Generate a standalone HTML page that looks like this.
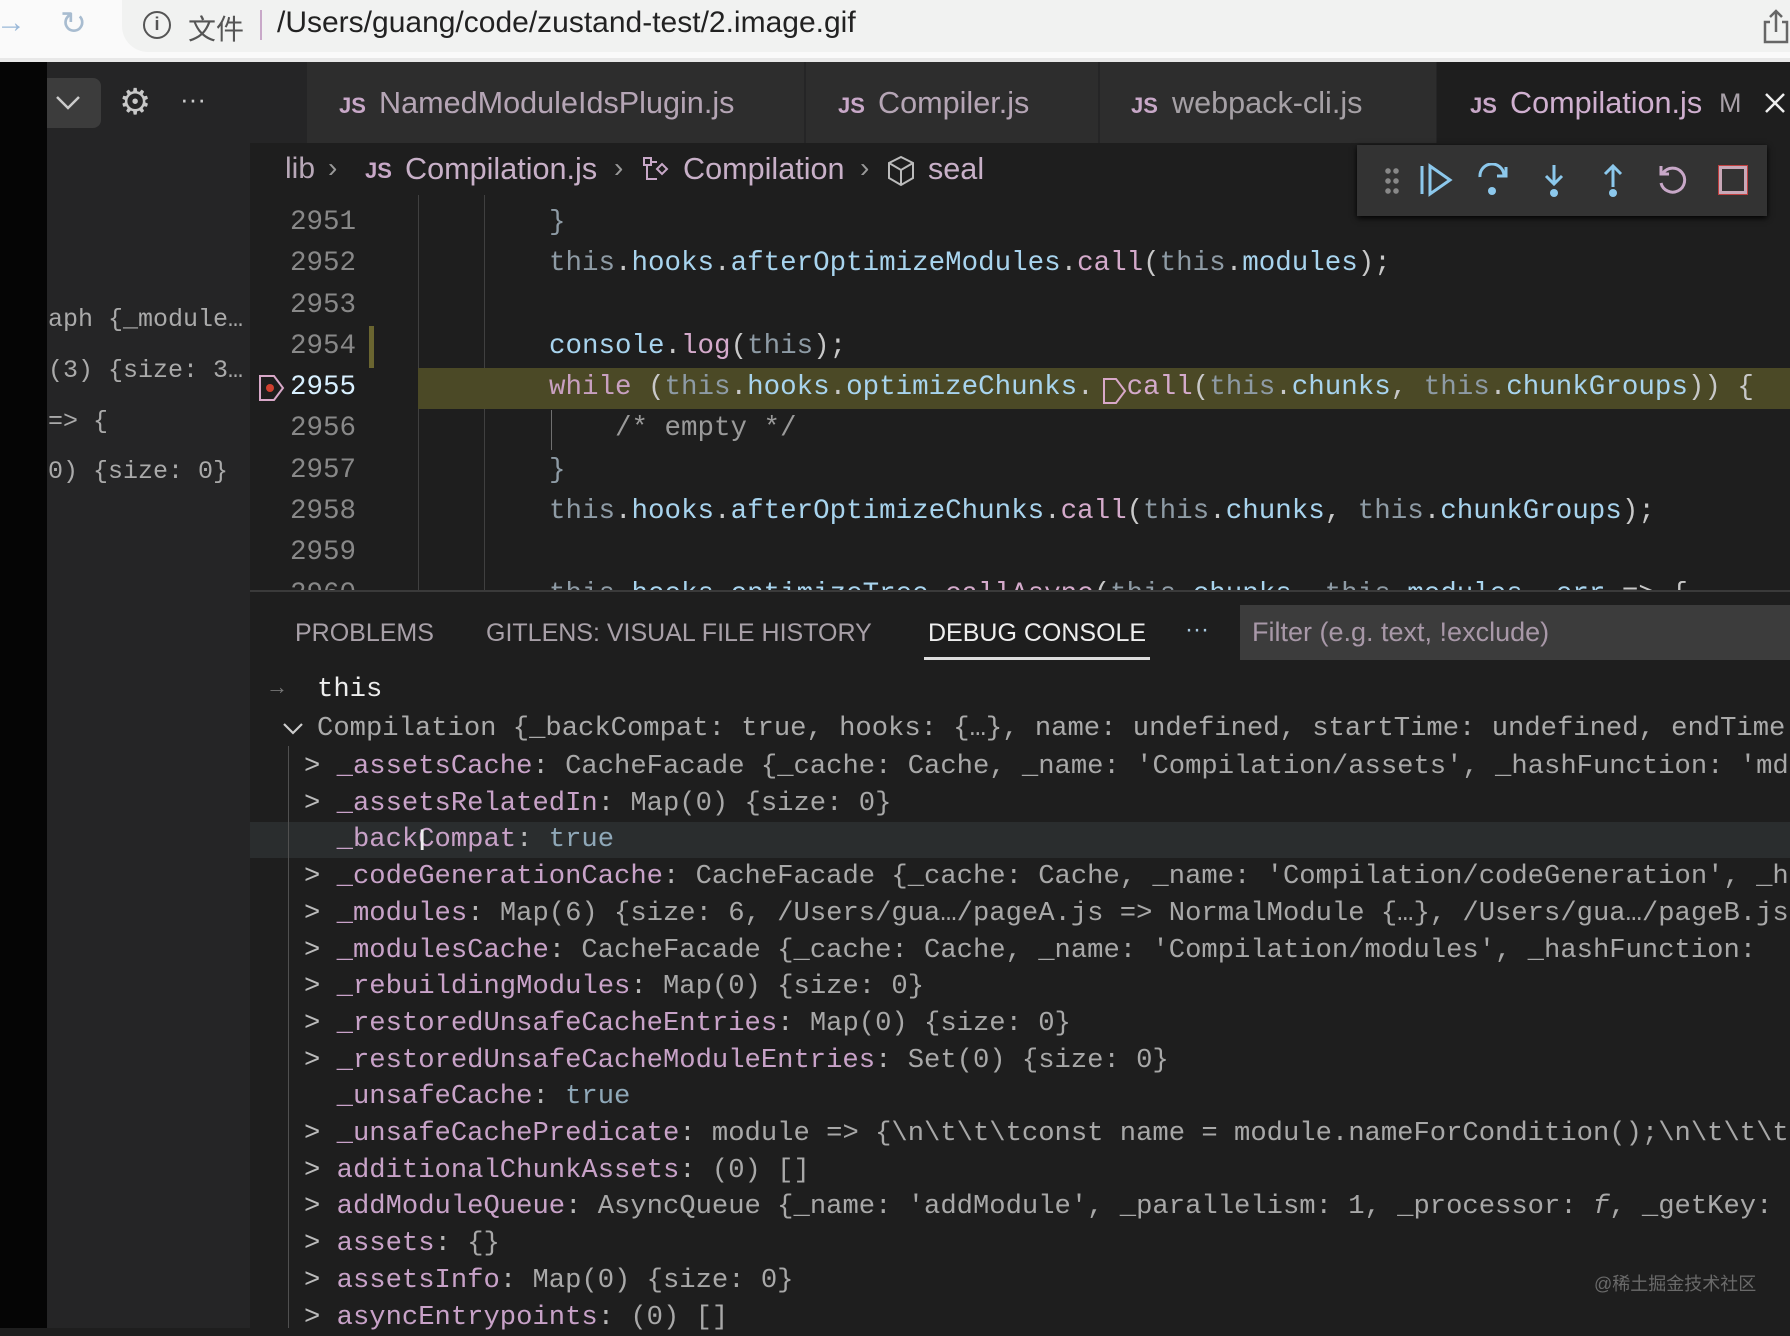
<!DOCTYPE html>
<html><head><meta charset="utf-8">
<style>
*{margin:0;padding:0;box-sizing:border-box}
body{width:1790px;height:1328px;overflow:hidden;background:#1e1e1e;position:relative;font-family:"Liberation Sans","Noto Sans CJK SC",sans-serif}
.a{position:absolute;white-space:pre}
.m{font-family:"Liberation Mono","DejaVu Sans Mono",monospace}
.code{font-size:27.5px;line-height:41.3px;color:#c8c8c8}
.t{color:#8e9ba5}.p{color:#a8d4ee}.f{color:#d4aacb}.k{color:#c8a0c0}.c{color:#9a9a9a}
.con{font-size:27.2px;line-height:36px;color:#b8b8b8}
.n{color:#c8a2c8}.v{color:#a8a8a8}.b{color:#8fa8b8}.g{color:#bbb}
</style></head><body>
<!-- browser bar -->
<div class="a" style="left:0;top:0;width:1790px;height:62px;background:#fafafa"></div>
<div class="a" style="left:122px;top:0;width:1668px;height:52px;background:#f1f2f1;border-radius:0 0 0 26px"></div>
<div class="a" style="left:0;top:58px;width:1790px;height:4px;background:#e8e8e8"></div>
<div class="a" style="left:-4px;top:6px;font-size:30px;color:#9ab8d8">→</div>
<div class="a" style="left:60px;top:4px;font-size:32px;color:#a8bcd0">↻</div>
<div class="a" style="left:143px;top:11px;width:28px;height:28px;border:2.5px solid #555;border-radius:50%;font-size:18px;line-height:22px;text-align:center;color:#555;font-weight:bold">i</div>
<div class="a" style="left:188px;top:8px;font-size:28px;color:#555">文件</div>
<div class="a" style="left:260px;top:10px;width:2px;height:30px;background:#c8a8c8"></div>
<div class="a" style="left:277px;top:6px;font-size:30px;color:#222">/Users/guang/code/zustand-test/2.image.gif</div>
<svg class="a" style="left:1762px;top:8px" width="28" height="36" viewBox="0 0 28 36"><path d="M8 14H3v20h22V14h-5M14 24V3M8 9l6-6 6 6" fill="none" stroke="#666" stroke-width="2.5"/></svg>
<!-- left black & sidebar -->
<div class="a" style="left:0;top:62px;width:47px;height:1266px;background:#050505"></div>
<div class="a" style="left:47px;top:62px;width:203px;height:1266px;background:#252526"></div>
<div class="a" style="left:47px;top:78px;width:54px;height:50px;background:#3c3c3c;border-radius:0 8px 8px 0"></div>
<svg class="a" style="left:55px;top:95px" width="26" height="16"><path d="M2 2l11 11 11-11" fill="none" stroke="#ccc" stroke-width="2.5"/></svg>
<div class="a" style="left:119px;top:80px;font-size:36px;color:#c8c8c8;line-height:44px">⚙</div>
<div class="a" style="left:180px;top:84px;font-size:26px;color:#ccc">···</div>
<div class="a m" style="left:48px;top:302px;font-size:25px;line-height:36px;color:#aaa">aph {_module…</div>
<div class="a m" style="left:48px;top:353px;font-size:25px;line-height:36px;color:#aaa">(3) {size: 3…</div>
<div class="a m" style="left:48px;top:404px;font-size:25px;line-height:36px;color:#aaa">=> {</div>
<div class="a m" style="left:48px;top:454px;font-size:25px;line-height:36px;color:#aaa">0) {size: 0}</div>
<!-- tabs -->
<div class="a" style="left:250px;top:62px;width:1540px;height:81px;background:#252526"></div>
<div class="a" style="left:306px;top:62px;width:498px;height:81px;background:#2d2d2d;border-left:1px solid #252526"></div>
<div class="a" style="left:805px;top:62px;width:293px;height:81px;background:#2d2d2d;border-left:1px solid #252526"></div>
<div class="a" style="left:1099px;top:62px;width:337px;height:81px;background:#2d2d2d;border-left:1px solid #252526"></div>
<div class="a" style="left:1437px;top:62px;width:353px;height:81px;background:#1e1e1e"></div>
<div class="a" style="left:339px;top:93px;font-size:22px;font-weight:bold;color:#c8a8c8">JS</div>
<div class="a" style="left:379px;top:86px;font-size:30.6px;color:#b5a5b5">NamedModuleIdsPlugin.js</div>
<div class="a" style="left:838px;top:93px;font-size:22px;font-weight:bold;color:#c8a8c8">JS</div>
<div class="a" style="left:878px;top:86px;font-size:30.6px;color:#b5a5b5">Compiler.js</div>
<div class="a" style="left:1131px;top:93px;font-size:22px;font-weight:bold;color:#c8a8c8">JS</div>
<div class="a" style="left:1172px;top:86px;font-size:30.6px;color:#a5a0a5">webpack-cli.js</div>
<div class="a" style="left:1470px;top:93px;font-size:22px;font-weight:bold;color:#c8a8c8">JS</div>
<div class="a" style="left:1510px;top:86px;font-size:30.6px;color:#d0b0d0">Compilation.js</div>
<div class="a" style="left:1719px;top:88px;font-size:27px;color:#a8a0a8">M</div>
<svg class="a" style="left:1764px;top:92px" width="22" height="22"><path d="M2 2l18 18M20 2L2 20" stroke="#eee" stroke-width="2.5"/></svg>
<!-- breadcrumb -->
<div class="a" style="left:285px;top:152px;font-size:30px;color:#b8a8b8">lib</div>
<div class="a" style="left:328px;top:152px;font-size:28px;color:#999">›</div>
<div class="a" style="left:365px;top:158px;font-size:22px;font-weight:bold;color:#c8a8c8">JS</div>
<div class="a" style="left:405px;top:152px;font-size:30.6px;color:#c8b0c8">Compilation.js</div>
<div class="a" style="left:614px;top:152px;font-size:28px;color:#999">›</div>
<svg class="a" style="left:641px;top:155px" width="32" height="32"><path d="M3 3h7v7H3zM16 14l5-5 5 5-5 5zM10 7h6M6 10v14h10" fill="none" stroke="#c8a8c8" stroke-width="2"/></svg>
<div class="a" style="left:683px;top:152px;font-size:30.6px;color:#c8b0c8">Compilation</div>
<div class="a" style="left:860px;top:152px;font-size:28px;color:#999">›</div>
<svg class="a" style="left:886px;top:155px" width="30" height="32"><path d="M15 2l12 6v15l-12 7-12-7V8zM3 8l12 7 12-7M15 15v15" fill="none" stroke="#bbb" stroke-width="2"/></svg>
<div class="a" style="left:928px;top:152px;font-size:30.6px;color:#c8b0c8">seal</div>
<!-- debug toolbar -->
<div class="a" style="left:1357px;top:145px;width:410px;height:71px;background:#333;box-shadow:0 2px 6px #000"></div>
<div class="a" style="left:1384px;top:166px;width:16px;height:30px;background:radial-gradient(circle,#888 2.5px,transparent 3px) 0 0/8px 10px"></div>
<svg class="a" style="left:1418px;top:163px" width="36" height="34"><path d="M4 3v28M12 3l20 14-20 14z" fill="none" stroke="#8cc8ec" stroke-width="3"/></svg>
<svg class="a" style="left:1476px;top:163px" width="36" height="36"><path d="M4 14a12 12 0 0 1 24-2M30 4v9h-9" fill="none" stroke="#8cc8ec" stroke-width="3"/><circle cx="16" cy="28" r="4" fill="#8cc8ec"/></svg>
<svg class="a" style="left:1536px;top:163px" width="36" height="36"><path d="M18 2v18M10 13l8 8 8-8" fill="none" stroke="#8cc8ec" stroke-width="3"/><circle cx="18" cy="30" r="4" fill="#8cc8ec"/></svg>
<svg class="a" style="left:1595px;top:163px" width="36" height="36"><path d="M18 24V4M10 11l8-8 8 8" fill="none" stroke="#8cc8ec" stroke-width="3"/><circle cx="18" cy="30" r="4" fill="#8cc8ec"/></svg>
<svg class="a" style="left:1655px;top:163px" width="36" height="36"><path d="M8 10a12 12 0 1 1-2 10M6 3v8h8" fill="none" stroke="#c8a8c8" stroke-width="3"/></svg>
<div class="a" style="left:1719px;top:166px;width:28px;height:28px;border:3px solid #c8a8b8;outline:1px solid #c04040"></div>
<!-- editor gutter -->
<div class="a" style="left:418px;top:195px;width:1px;height:396px;background:#404040"></div>
<div class="a" style="left:484px;top:195px;width:1px;height:396px;background:#404040"></div>
<div class="a" style="left:369px;top:326px;width:5px;height:42px;background:#6a6530"></div>
<div class="a" style="left:418px;top:368px;width:1372px;height:41px;background:#4b4926"></div>
<div class="a" style="left:551px;top:410px;width:1px;height:40px;background:#707070"></div>
<svg class="a" style="left:258px;top:374px" width="28" height="30"><path d="M2 2h14l9 12-9 12H2z" fill="none" stroke="#d8a8c8" stroke-width="2"/><circle cx="12" cy="14" r="4" fill="#d04030"/></svg>
<div class="a m code" style="left:250px;top:202px;width:106px;text-align:right;color:#888">2951
2952
2953
2954
<span style="color:#d8f0ff">2955</span>
2956
2957
2958
2959
2960</div>
<div class="a m code" style="left:549px;top:202px"><span class="t">}</span>
<span class="t">this</span>.<span class="p">hooks</span>.<span class="p">afterOptimizeModules</span>.<span class="f">call</span>(<span class="t">this</span>.<span class="p">modules</span>);

<span class="p">console</span>.<span class="f">log</span>(<span class="t">this</span>);
<span class="k">while</span> (<span class="t">this</span>.<span class="p">hooks</span>.<span class="p">optimizeChunks</span>.  <span class="f">call</span>(<span class="t">this</span>.<span class="p">chunks</span>, <span class="t">this</span>.<span class="p">chunkGroups</span>)) {
    <span class="c">/* empty */</span>
<span class="t">}</span>
<span class="t">this</span>.<span class="p">hooks</span>.<span class="p">afterOptimizeChunks</span>.<span class="f">call</span>(<span class="t">this</span>.<span class="p">chunks</span>, <span class="t">this</span>.<span class="p">chunkGroups</span>);

<span class="t">this</span>.<span class="p">hooks</span>.<span class="p">optimizeTree</span>.<span class="f">callAsync</span>(<span class="t">this</span>.<span class="p">chunks</span>, <span class="t">this</span>.<span class="p">modules</span>, <span class="p">err</span> => {</div>
<svg class="a" style="left:1102px;top:377px" width="26" height="28"><path d="M2 2h12l9 12-9 12H2z" fill="none" stroke="#d8a8c8" stroke-width="2"/></svg>
<!-- panel -->
<div class="a" style="left:250px;top:590px;width:1540px;height:738px;background:#1e1e1e;border-top:2px solid #3a3a3a"></div>
<div class="a" style="left:295px;top:619px;font-size:25px;color:#a8a0a8">PROBLEMS</div>
<div class="a" style="left:486px;top:619px;font-size:25px;color:#a8a0a8">GITLENS: VISUAL FILE HISTORY</div>
<div class="a" style="left:928px;top:619px;font-size:25px;color:#eee">DEBUG CONSOLE</div>
<div class="a" style="left:924px;top:657px;width:226px;height:3px;background:#ddd"></div>
<div class="a" style="left:1185px;top:616px;font-size:24px;color:#a8c8e0">···</div>
<div class="a" style="left:1240px;top:605px;width:550px;height:55px;background:#3c3c3c"></div>
<div class="a" style="left:1252px;top:617px;font-size:27px;color:#a898a8">Filter (e.g. text, !exclude)</div>
<div class="a" style="left:266px;top:674px;font-size:22px;color:#777">→</div>
<div class="a m con" style="left:317px;top:672px;color:#eee">this</div>
<div class="a" style="left:250px;top:822px;width:1540px;height:36px;background:#2a2d2e"></div>
<div class="a" style="left:288px;top:746px;width:1px;height:582px;background:#505050"></div>
<svg class="a" style="left:282px;top:722px" width="22" height="14"><path d="M2 2l9 9 9-9" fill="none" stroke="#ccc" stroke-width="2.2"/></svg>
<div class="a m con" style="left:317px;top:711px;color:#aaa">Compilation {_backCompat: true, hooks: {…}, name: undefined, startTime: undefined, endTime</div>
<div class="a m con" style="left:304px;top:749px;line-height:36.7px"><span class="g">&gt;</span> <span class="n">_assetsCache</span>: <span class="v">CacheFacade {_cache: Cache, _name: 'Compilation/assets', _hashFunction: 'md</span>
<span class="g">&gt;</span> <span class="n">_assetsRelatedIn</span>: <span class="v">Map(0) {size: 0}</span>
  <span class="n">_backCompat</span>: <span class="b">true</span>
<span class="g">&gt;</span> <span class="n">_codeGenerationCache</span>: <span class="v">CacheFacade {_cache: Cache, _name: 'Compilation/codeGeneration', _h</span>
<span class="g">&gt;</span> <span class="n">_modules</span>: <span class="v">Map(6) {size: 6, /Users/gua…/pageA.js => NormalModule {…}, /Users/gua…/pageB.js</span>
<span class="g">&gt;</span> <span class="n">_modulesCache</span>: <span class="v">CacheFacade {_cache: Cache, _name: 'Compilation/modules', _hashFunction: </span>
<span class="g">&gt;</span> <span class="n">_rebuildingModules</span>: <span class="v">Map(0) {size: 0}</span>
<span class="g">&gt;</span> <span class="n">_restoredUnsafeCacheEntries</span>: <span class="v">Map(0) {size: 0}</span>
<span class="g">&gt;</span> <span class="n">_restoredUnsafeCacheModuleEntries</span>: <span class="v">Set(0) {size: 0}</span>
  <span class="n">_unsafeCache</span>: <span class="b">true</span>
<span class="g">&gt;</span> <span class="n">_unsafeCachePredicate</span>: <span class="v">module => {\n\t\t\tconst name = module.nameForCondition();\n\t\t\t</span>
<span class="g">&gt;</span> <span class="n">additionalChunkAssets</span>: <span class="v">(0) []</span>
<span class="g">&gt;</span> <span class="n">addModuleQueue</span>: <span class="v">AsyncQueue {_name: 'addModule', _parallelism: 1, _processor: <i>f</i>, _getKey: </span>
<span class="g">&gt;</span> <span class="n">assets</span>: <span class="v">{}</span>
<span class="g">&gt;</span> <span class="n">assetsInfo</span>: <span class="v">Map(0) {size: 0}</span>
<span class="g">&gt;</span> <span class="n">asyncEntrypoints</span>: <span class="v">(0) []</span></div>
<div class="a" style="left:418px;top:824px;font-size:30px;color:#eee">I</div>
<div class="a" style="left:1594px;top:1270px;font-size:18px;color:#6a6a6a">@稀土掘金技术社区</div>
</body></html>
